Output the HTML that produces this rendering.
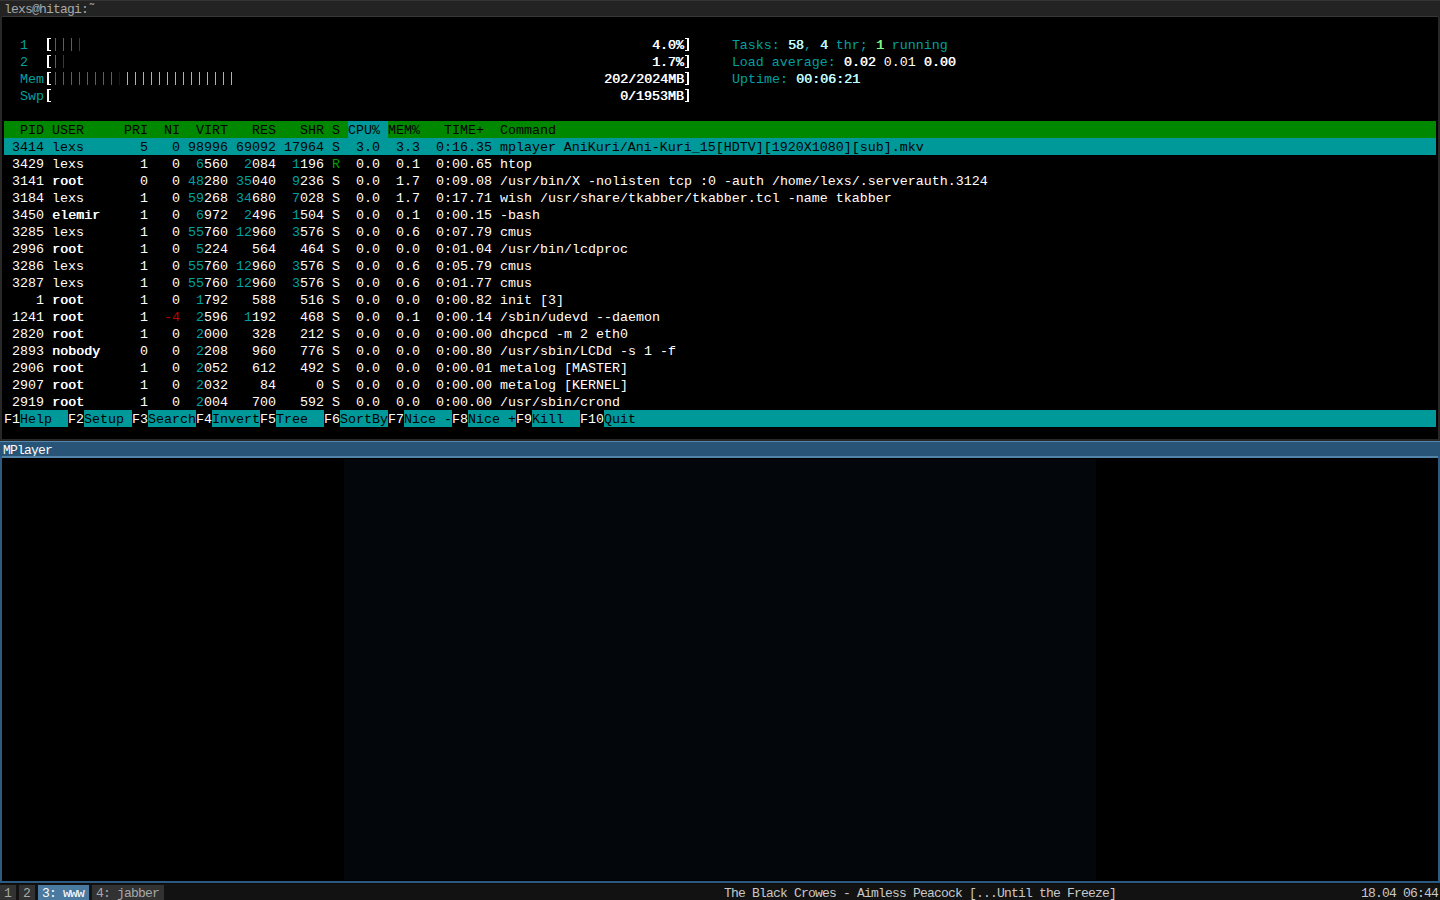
<!DOCTYPE html>
<html><head><meta charset="utf-8"><style>
html,body{margin:0;padding:0;width:1440px;height:900px;overflow:hidden;background:#121212;position:relative}
.a{position:absolute}
#title{left:0;top:0;width:1440px;height:17px;background:#232323;border-top:1px solid #343434;box-sizing:border-box}
#title b{position:absolute;left:4px;top:0;font:normal 13px/17px "Liberation Mono",monospace;letter-spacing:-0.8px;color:#a8a8a8}
#tborder{left:0;top:17px;width:1440px;height:424px;background:#282828}
#tline{left:2px;top:16px;width:1436px;height:1px;background:#383838}
#term{left:2px;top:17px;width:1436px;height:422px;background:#000}
#rows{left:4px;top:19px;width:1432px;height:408px}
.r{position:absolute;left:0;height:17px;white-space:pre;font:13.3312px/19px "Liberation Mono",monospace;color:#ffffff}
.r span{display:inline-block;height:17px;vertical-align:top}
.r i{display:inline-block;width:8px;height:17px;vertical-align:top;font-style:normal}
.b{background-repeat:no-repeat;background-position:3px 2px;background-size:1px 13px}
.lb{background:linear-gradient(#fff,#fff) 3px 2px/2px 13px no-repeat,linear-gradient(#fff,#fff) 3px 2px/4px 1px no-repeat,linear-gradient(#fff,#fff) 3px 14px/4px 1px no-repeat}
.rb{background:linear-gradient(#fff,#fff) 3px 2px/2px 13px no-repeat,linear-gradient(#fff,#fff) 1px 2px/4px 1px no-repeat,linear-gradient(#fff,#fff) 1px 14px/4px 1px no-repeat}
#mpw{left:0;top:441px;width:1440px;height:442px;background:#2c5a80}
#mptitle{left:0;top:441px;width:1440px;height:15px;background:#285577;border-top:1px solid #5585aa;box-sizing:border-box}
#mptitle b{position:absolute;left:3px;top:0;font:normal 13px/17px "Liberation Mono",monospace;letter-spacing:-0.8px;color:#fff}
#mpline{left:2px;top:456px;width:1436px;height:2px;background:#5283a8}
#mpvid{left:2px;top:458px;width:1436px;height:423px;background:#000}
#mpvid2{left:344px;top:459px;width:752px;height:421px;background:#03060a}
#bar{left:0;top:883px;width:1440px;height:1px;background:#0e0c0a}
.tag{position:absolute;top:885px;height:15px;background:#323232;font:13px/17px "Liberation Mono",monospace;letter-spacing:-0.8px;color:#a8a8a8;white-space:pre}
.st{position:absolute;top:885px;font:13px/17px "Liberation Mono",monospace;letter-spacing:-0.8px;color:#c8c8c8;white-space:pre}
</style></head><body>
<div id="title" class="a"><b>lexs@hitagi:&#732;</b></div>
<div id="tborder" class="a"></div>
<div id="tline" class="a"></div>
<div id="term" class="a"></div>
<div id="rows" class="a">
<div class="r" style="top:17px">  <span style="color:#00a0a0">1  </span><i class="lb"></i><i class="b" style="background-image:linear-gradient(#00a000,#00a000)"></i><i class="b" style="background-image:linear-gradient(#00a000,#00a000)"></i><i class="b" style="background-image:linear-gradient(#00a000,#00a000)"></i><i class="b" style="background-image:linear-gradient(#c00000,#c00000)"></i>                                                                       <span style="color:#ffffff;text-shadow:0.5px 0 #ffffff">4.0%</span><i class="rb"></i>     <span style="color:#00a0a0">Tasks: </span><span style="color:#c0ffff;text-shadow:0.5px 0 #c0ffff">58</span><span style="color:#00a0a0">, </span><span style="color:#c0ffff;text-shadow:0.5px 0 #c0ffff">4</span><span style="color:#00a0a0"> thr; </span><span style="color:#80ff80;text-shadow:0.5px 0 #80ff80">1</span><span style="color:#00a0a0"> running</span></div>
<div class="r" style="top:34px">  <span style="color:#00a0a0">2  </span><i class="lb"></i><i class="b" style="background-image:linear-gradient(#00a000,#00a000)"></i><i class="b" style="background-image:linear-gradient(#c00000,#c00000)"></i>                                                                         <span style="color:#ffffff;text-shadow:0.5px 0 #ffffff">1.7%</span><i class="rb"></i>     <span style="color:#00a0a0">Load average: </span><span style="color:#ffffff;text-shadow:0.5px 0 #ffffff">0.02 </span><span style="color:#ffffff">0.01 </span><span style="color:#ffffff;text-shadow:0.5px 0 #ffffff">0.00</span></div>
<div class="r" style="top:51px">  <span style="color:#00a0a0">Mem</span><i class="lb"></i><i class="b" style="background-image:linear-gradient(#00a000,#00a000)"></i><i class="b" style="background-image:linear-gradient(#00a000,#00a000)"></i><i class="b" style="background-image:linear-gradient(#00a000,#00a000)"></i><i class="b" style="background-image:linear-gradient(#00a000,#00a000)"></i><i class="b" style="background-image:linear-gradient(#00a000,#00a000)"></i><i class="b" style="background-image:linear-gradient(#00a000,#00a000)"></i><i class="b" style="background-image:linear-gradient(#00a000,#00a000)"></i><i class="b" style="background-image:linear-gradient(#00a000,#00a000)"></i><i class="b" style="background-image:linear-gradient(#0000c8,#0000c8)"></i><i class="b" style="background-image:linear-gradient(#c8c800,#c8c800)"></i><i class="b" style="background-image:linear-gradient(#c8c800,#c8c800)"></i><i class="b" style="background-image:linear-gradient(#c8c800,#c8c800)"></i><i class="b" style="background-image:linear-gradient(#c8c800,#c8c800)"></i><i class="b" style="background-image:linear-gradient(#c8c800,#c8c800)"></i><i class="b" style="background-image:linear-gradient(#c8c800,#c8c800)"></i><i class="b" style="background-image:linear-gradient(#c8c800,#c8c800)"></i><i class="b" style="background-image:linear-gradient(#c8c800,#c8c800)"></i><i class="b" style="background-image:linear-gradient(#c8c800,#c8c800)"></i><i class="b" style="background-image:linear-gradient(#c8c800,#c8c800)"></i><i class="b" style="background-image:linear-gradient(#c8c800,#c8c800)"></i><i class="b" style="background-image:linear-gradient(#c8c800,#c8c800)"></i><i class="b" style="background-image:linear-gradient(#c8c800,#c8c800)"></i><i class="b" style="background-image:linear-gradient(#c8c800,#c8c800)"></i>                                              <span style="color:#ffffff;text-shadow:0.5px 0 #ffffff">202/2024MB</span><i class="rb"></i>     <span style="color:#00a0a0">Uptime: </span><span style="color:#c0ffff;text-shadow:0.5px 0 #c0ffff">00:06:21</span></div>
<div class="r" style="top:68px">  <span style="color:#00a0a0">Swp</span><i class="lb"></i>                                                                       <span style="color:#ffffff;text-shadow:0.5px 0 #ffffff">0/1953MB</span><i class="rb"></i></div>
<div class="r" style="top:102px"><span style="background:#008800;color:#000;width:1432px">  PID USER     PRI  NI  VIRT   RES   SHR S <span style="background:#009999">CPU% </span>MEM%   TIME+  Command</span></div>
<div class="r" style="top:119px"><span style="background:#009999;color:#000;width:1432px"> 3414 lexs       5   0 98996 69092 17964 S  3.0  3.3  0:16.35 mplayer AniKuri/Ani-Kuri_15[HDTV][1920X1080][sub].mkv</span></div>
<div class="r" style="top:136px"> 3429 lexs       1   0  <span style="color:#00a0a0">6</span>560  <span style="color:#00a0a0">2</span>084  <span style="color:#00a0a0">1</span>196 <span style="color:#00a000">R</span>  0.0  0.1  0:00.65 htop</div>
<div class="r" style="top:153px"> 3141 <span style="color:#ffffff;text-shadow:0.5px 0 #ffffff">root    </span>   0   0 <span style="color:#00a0a0">48</span>280 <span style="color:#00a0a0">35</span>040  <span style="color:#00a0a0">9</span>236 S  0.0  1.7  0:09.08 /usr/bin/X -nolisten tcp :0 -auth /home/lexs/.serverauth.3124</div>
<div class="r" style="top:170px"> 3184 lexs       1   0 <span style="color:#00a0a0">59</span>268 <span style="color:#00a0a0">34</span>680  <span style="color:#00a0a0">7</span>028 S  0.0  1.7  0:17.71 wish /usr/share/tkabber/tkabber.tcl -name tkabber</div>
<div class="r" style="top:187px"> 3450 <span style="color:#ffffff;text-shadow:0.5px 0 #ffffff">elemir  </span>   1   0  <span style="color:#00a0a0">6</span>972  <span style="color:#00a0a0">2</span>496  <span style="color:#00a0a0">1</span>504 S  0.0  0.1  0:00.15 -bash</div>
<div class="r" style="top:204px"> 3285 lexs       1   0 <span style="color:#00a0a0">55</span>760 <span style="color:#00a0a0">12</span>960  <span style="color:#00a0a0">3</span>576 S  0.0  0.6  0:07.79 cmus</div>
<div class="r" style="top:221px"> 2996 <span style="color:#ffffff;text-shadow:0.5px 0 #ffffff">root    </span>   1   0  <span style="color:#00a0a0">5</span>224   564   464 S  0.0  0.0  0:01.04 /usr/bin/lcdproc</div>
<div class="r" style="top:238px"> 3286 lexs       1   0 <span style="color:#00a0a0">55</span>760 <span style="color:#00a0a0">12</span>960  <span style="color:#00a0a0">3</span>576 S  0.0  0.6  0:05.79 cmus</div>
<div class="r" style="top:255px"> 3287 lexs       1   0 <span style="color:#00a0a0">55</span>760 <span style="color:#00a0a0">12</span>960  <span style="color:#00a0a0">3</span>576 S  0.0  0.6  0:01.77 cmus</div>
<div class="r" style="top:272px">    1 <span style="color:#ffffff;text-shadow:0.5px 0 #ffffff">root    </span>   1   0  <span style="color:#00a0a0">1</span>792   588   516 S  0.0  0.0  0:00.82 init [3]</div>
<div class="r" style="top:289px"> 1241 <span style="color:#ffffff;text-shadow:0.5px 0 #ffffff">root    </span>   1 <span style="color:#c00000"> -4</span>  <span style="color:#00a0a0">2</span>596  <span style="color:#00a0a0">1</span>192   468 S  0.0  0.1  0:00.14 /sbin/udevd --daemon</div>
<div class="r" style="top:306px"> 2820 <span style="color:#ffffff;text-shadow:0.5px 0 #ffffff">root    </span>   1   0  <span style="color:#00a0a0">2</span>000   328   212 S  0.0  0.0  0:00.00 dhcpcd -m 2 eth0</div>
<div class="r" style="top:323px"> 2893 <span style="color:#ffffff;text-shadow:0.5px 0 #ffffff">nobody  </span>   0   0  <span style="color:#00a0a0">2</span>208   960   776 S  0.0  0.0  0:00.80 /usr/sbin/LCDd -s 1 -f</div>
<div class="r" style="top:340px"> 2906 <span style="color:#ffffff;text-shadow:0.5px 0 #ffffff">root    </span>   1   0  <span style="color:#00a0a0">2</span>052   612   492 S  0.0  0.0  0:00.01 metalog [MASTER]</div>
<div class="r" style="top:357px"> 2907 <span style="color:#ffffff;text-shadow:0.5px 0 #ffffff">root    </span>   1   0  <span style="color:#00a0a0">2</span>032    84     0 S  0.0  0.0  0:00.00 metalog [KERNEL]</div>
<div class="r" style="top:374px"> 2919 <span style="color:#ffffff;text-shadow:0.5px 0 #ffffff">root    </span>   1   0  <span style="color:#00a0a0">2</span>004   700   592 S  0.0  0.0  0:00.00 /usr/sbin/crond</div>
<div class="r" style="top:391px"><span style="width:1432px;background:#009999"><span style="background:#000">F1</span><span style="color:#000">Help  </span><span style="background:#000">F2</span><span style="color:#000">Setup </span><span style="background:#000">F3</span><span style="color:#000">Search</span><span style="background:#000">F4</span><span style="color:#000">Invert</span><span style="background:#000">F5</span><span style="color:#000">Tree  </span><span style="background:#000">F6</span><span style="color:#000">SortBy</span><span style="background:#000">F7</span><span style="color:#000">Nice -</span><span style="background:#000">F8</span><span style="color:#000">Nice +</span><span style="background:#000">F9</span><span style="color:#000">Kill  </span><span style="background:#000">F10</span><span style="color:#000">Quit</span></span></div>
</div>
<div id="mpw" class="a"></div>
<div id="mptitle" class="a"><b>MPlayer</b></div>
<div id="mpline" class="a"></div>
<div id="mpvid" class="a"></div>
<div id="mpvid2" class="a"></div>
<div id="bar" class="a"></div>
<div class="tag" style="left:0;width:16px"><span style="position:absolute;left:4px;top:0">1</span></div>
<div class="tag" style="left:19px;width:16px"><span style="position:absolute;left:4px;top:0">2</span></div>
<div class="tag" style="left:38px;width:51px;background:#4a7aa0;color:#fff"><span style="position:absolute;left:4px;top:0">3: www</span></div>
<div class="tag" style="left:92px;width:72px"><span style="position:absolute;left:4px;top:0">4: jabber</span></div>
<div class="st" style="left:724px">The Black Crowes - Aimless Peacock [...Until the Freeze]</div>
<div class="st" style="left:1361px">18.04 06:44</div>
</body></html>
